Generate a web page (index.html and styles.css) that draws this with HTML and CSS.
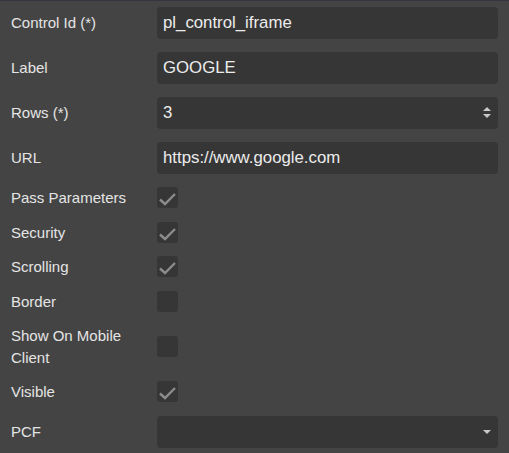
FILE: index.html
```html
<!DOCTYPE html>
<html>
<head>
<meta charset="utf-8">
<link rel="stylesheet" href="styles.css">
</head>
<body>
<div class="panel">
  <div class="row"><div class="label">Control Id (*)</div><div class="field"><div class="input">pl_control_iframe</div></div></div>
  <div class="row"><div class="label">Label</div><div class="field"><div class="input">GOOGLE</div></div></div>
  <div class="row"><div class="label">Rows (*)</div><div class="field"><div class="input spin">3<span class="arrows"><svg width="10" height="14" viewBox="0 0 10 14"><path d="M1 5 L5 1 L9 5 Z M1 8 L9 8 L5 12 Z" fill="#c8c8c8"/></svg></span></div></div></div>
  <div class="row"><div class="label">URL</div><div class="field"><div class="input">https://www.google.com</div></div></div>
  <div class="row crow"><div class="label">Pass Parameters</div><div class="field"><span class="cb"><svg width="21" height="21" viewBox="0 0 21 21"><path d="M3 12.5 L8 17 L18 7" fill="none" stroke="#8c8c8c" stroke-width="2.4"/></svg></span></div></div>
  <div class="row crow"><div class="label">Security</div><div class="field"><span class="cb"><svg width="21" height="21" viewBox="0 0 21 21"><path d="M3 12.5 L8 17 L18 7" fill="none" stroke="#8c8c8c" stroke-width="2.4"/></svg></span></div></div>
  <div class="row crow"><div class="label">Scrolling</div><div class="field"><span class="cb"><svg width="21" height="21" viewBox="0 0 21 21"><path d="M3 12.5 L8 17 L18 7" fill="none" stroke="#8c8c8c" stroke-width="2.4"/></svg></span></div></div>
  <div class="row crow"><div class="label">Border</div><div class="field"><span class="cb"></span></div></div>
  <div class="row crow"><div class="label">Show On Mobile<br>Client</div><div class="field"><span class="cb"></span></div></div>
  <div class="row crow"><div class="label">Visible</div><div class="field"><span class="cb"><svg width="21" height="21" viewBox="0 0 21 21"><path d="M3 12.5 L8 17 L18 7" fill="none" stroke="#8c8c8c" stroke-width="2.4"/></svg></span></div></div>
  <div class="row"><div class="label">PCF</div><div class="field"><div class="input spin"><span class="arrows"><svg width="10" height="8" viewBox="0 0 10 8"><path d="M1 2 L9 2 L5 6 Z" fill="#c8c8c8"/></svg></span></div></div></div>
</div>
</body>
</html>
```
FILE: styles.css
```css
html, body {
  margin: 0;
  padding: 0;
  background: #444444;
}
body {
  width: 509px;
  height: 453px;
  overflow: hidden;
  border-top: 1px solid #33363f;
  box-sizing: border-box;
  font-family: "Liberation Sans", Arial, sans-serif;
  font-size: 15px;
  color: #e4e4e4;
}
.panel {
  display: flex;
  flex-direction: column;
  gap: 13px;
  padding: 6px 11px 0 11px;
}
.row {
  display: flex;
  align-items: center;
}
.label {
  width: 146px;
  flex: none;
  line-height: 21.5px;
}
.field {
  flex: 1;
  display: flex;
  align-items: center;
}
.input {
  flex: 1;
  height: 32px;
  box-sizing: border-box;
  background: #363636;
  border-radius: 4px;
  padding: 0 6px;
  line-height: 32px;
  font-size: 16.8px;
  color: #ececec;
  position: relative;
}
.spin .arrows {
  position: absolute;
  right: 6px;
  top: 50%;
  transform: translateY(-50%);
  display: flex;
}
.cb {
  width: 21px;
  height: 21px;
  background: #363636;
  border-radius: 3px;
  display: block;
}
.cb svg {
  display: block;
}
```
